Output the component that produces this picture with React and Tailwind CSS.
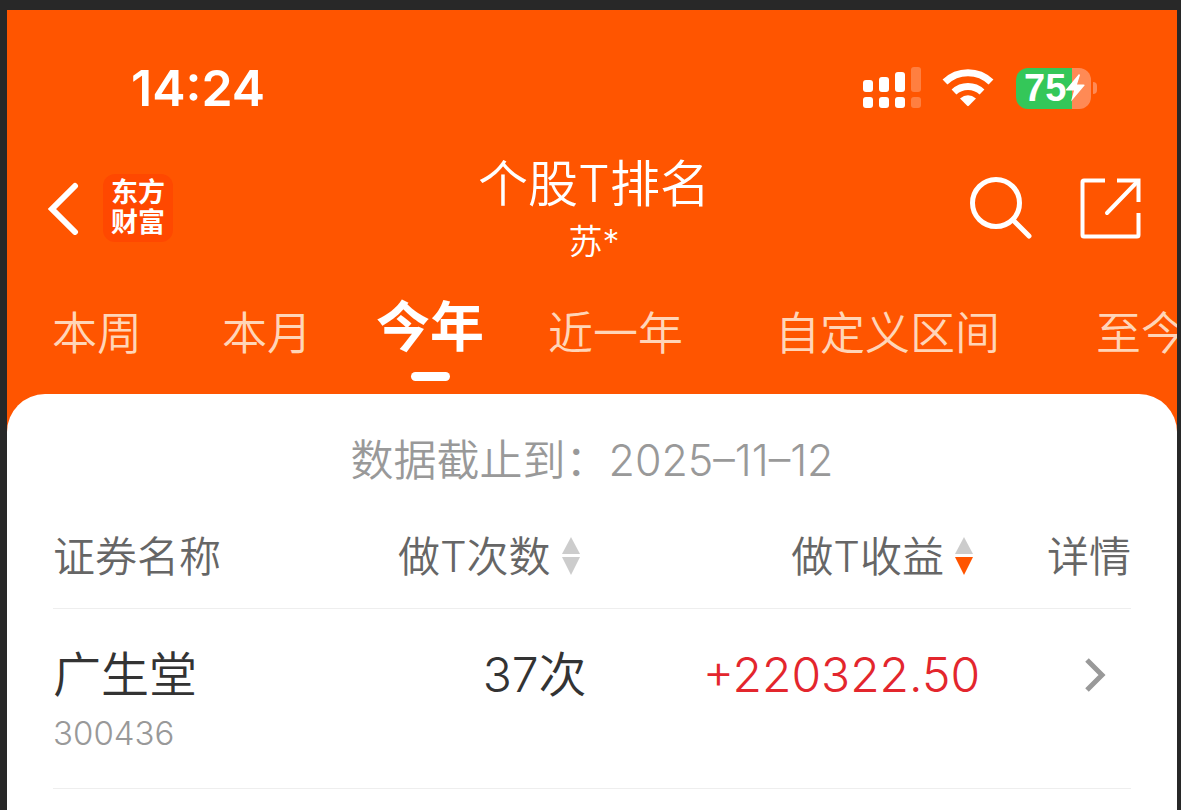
import { useState } from 'react';

const tabs = [
  { name: '本周', gap: '' },
  { name: '本月', gap: 'ml-20' },
  { name: '今年', gap: 'ml-16' },
  { name: '近一年', gap: 'ml-16' },
  { name: '自定义区间', gap: 'ml-23' },
  { name: '至今', gap: 'ml-24' },
];

const stocks = [
  {
    name: '广生堂', code: '300436', count: '37次', profit: '+220322.50',
  },
];

function Signal() {
  return (
    <svg width="60" height="42" viewBox="0 0 60 42" fill="#fff" aria-hidden="true">
      <rect x="1" y="13" width="10" height="12" rx="3" />
      <rect x="17" y="10" width="10" height="15" rx="3" />
      <rect x="33" y="5" width="10" height="20" rx="3" />
      <rect x="49" y="0" width="10" height="25" rx="3" opacity="0.25" />
      <rect x="1" y="30" width="10" height="11" rx="3" />
      <rect x="17" y="30" width="10" height="11" rx="3" />
      <rect x="33" y="30" width="10" height="11" rx="3" />
      <rect x="49" y="30" width="10" height="11" rx="3" opacity="0.25" />
    </svg>
  );
}

function Wifi() {
  return (
    <svg width="52" height="38" viewBox="0 0 52 38" aria-hidden="true">
      <g fill="none" stroke="#fff" strokeWidth="7">
        <path d="M3 13 A33 33 0 0 1 49 13" />
        <path d="M12 23 A20.500 20.500 0 0 1 40 23" />
      </g>
      <path d="M18 29.500 Q26 23 34 29.500 L26.800 36.800 Q26 37.500 25.200 36.800 Z" fill="#fff" />
    </svg>
  );
}

function Battery() {
  return (
    <div className="flex items-center gap-0.5">
      <div className="flex h-[41px] w-[75px] items-center overflow-hidden rounded-xl bg-linear-to-r from-[#34c759] from-75% to-[#ff8a55] to-75% pl-2">
        <span className="font-['Liberation_Sans',sans-serif] text-[38px] leading-10 font-bold">75</span>
        <svg className="shrink-0" width="19" height="28" viewBox="0 0 19 28" fill="#fff" aria-hidden="true">
          <path d="M13 0 L0 15.500 Q-0.500 16.500 1 16.500 H8 L5 27.500 L18.500 11.500 Q19 10.500 17.500 10.500 H11 L14 1 Z" />
        </svg>
      </div>
      <span className="h-3 w-1 rounded-r-full bg-[#ff8a55]" />
    </div>
  );
}

function SortIcon({ active }) {
  return (
    <svg width="20" height="38" viewBox="0 0 20 38" aria-hidden="true">
      <path d="M10 0 L19 17 H1 Z" fill="#ccc" />
      <path d="M1 20 H19 L10 38 Z" fill={active ? '#ff5500' : '#ccc'} />
    </svg>
  );
}

export default function App() {
  const [activeTab, setActiveTab] = useState('今年');

  return (
    <div className="min-h-screen overflow-hidden bg-[#282828] pt-[10px] pr-1 pl-[7px] font-[Inter,'Noto_Sans_CJK_SC',sans-serif]">
      <div className="flex min-h-[800px] flex-col overflow-hidden bg-[#ff5500]">
        <header className="text-white">
          <div className="flex items-center justify-between pt-[54px] pr-20 pl-[124px]">
            <span className="text-[50px] leading-12 font-semibold">14:24</span>
            <div className="flex items-center gap-5">
              <Signal />
              <div className="flex items-center gap-[22px]">
                <Wifi />
                <Battery />
              </div>
            </div>
          </div>

          <div className="mt-10 grid grid-cols-3 items-center pr-9 pl-10">
            <div className="flex items-center gap-6">
              <button type="button" aria-label="返回">
                <svg width="32" height="54" viewBox="0 0 32 54" fill="none" stroke="#fff" strokeWidth="6" strokeLinecap="round" aria-hidden="true">
                  <path d="M28 5 L5 28 L28 51" />
                </svg>
              </button>
              <span className="rounded-xl bg-[#ff4800] px-2 py-1 text-[27px] leading-[30px] font-bold">
                东方
                <br />
                财富
              </span>
            </div>
            <div className="text-center font-[350]">
              <h1 className="text-[50px] leading-[64px]">个股T排名</h1>
              <p className="mt-1 text-[34px] leading-11">苏*</p>
            </div>
            <div className="flex items-center justify-end gap-12">
              <button type="button" aria-label="搜索">
                <svg width="62" height="62" viewBox="0 0 62 62" fill="none" stroke="#fff" strokeWidth="5" strokeLinecap="round" aria-hidden="true">
                  <circle cx="26" cy="26" r="23.500" />
                  <path d="M43 43 L59 59" />
                </svg>
              </button>
              <button type="button" aria-label="分享">
                <svg width="61" height="61" viewBox="0 0 61 61" fill="none" stroke="#fff" strokeWidth="4" aria-hidden="true">
                  <path d="M25 2.500 H4 Q2.500 2.500 2.500 4 V57 Q2.500 58.500 4 58.500 H57 Q58.500 58.500 58.500 57 V35" />
                  <path d="M37 2.500 H58.500 V24" />
                  <path d="M27 35 L58 3" strokeLinecap="round" />
                </svg>
              </button>
            </div>
          </div>

          <nav className="flex h-[130px] items-start overflow-hidden pt-8 pl-[45px] whitespace-nowrap">
            {tabs.map((tab) => (
              <button
                key={tab.name}
                type="button"
                onClick={() => setActiveTab(tab.name)}
                className={`flex shrink-0 flex-col items-center ${tab.gap}`}
              >
                {activeTab === tab.name ? (
                  <>
                    <span className="text-[54px] leading-[64px] font-bold">{tab.name}</span>
                    <span className="mt-3 h-[9px] w-[39px] rounded-full bg-white" />
                  </>
                ) : (
                  <span className="text-[45px] leading-[76px] font-[350] text-[#ffd5b8]">{tab.name}</span>
                )}
              </button>
            ))}
          </nav>
        </header>

        <main className="grow rounded-t-[38px] bg-white px-[46px] pt-9">
          <p className="text-center text-[43px] leading-[60px] font-[350] text-[#999]">数据截止到：2025–11–12</p>

          <table className="mt-[15px] w-full table-fixed">
            <thead>
              <tr className="h-[103px] border-b border-[#eee] text-[42px] text-[#666]">
                <th className="w-[26%] text-left font-[350]">证券名称</th>
                <th className="w-[23.5%] font-[350]">
                  <button type="button" className="ml-auto flex items-center gap-2.5 pr-1.5 whitespace-nowrap">
                    做T次数
                    <SortIcon />
                  </button>
                </th>
                <th className="w-[36.5%] font-[350]">
                  <button type="button" className="ml-auto flex items-center gap-2.5 pr-1.5 whitespace-nowrap">
                    做T收益
                    <SortIcon active />
                  </button>
                </th>
                <th className="w-[14%] text-right font-[350]">详情</th>
              </tr>
            </thead>
            <tbody>
              {stocks.map((stock) => (
                <tr key={stock.code} className="h-[180px] border-b border-[#eee] align-top text-[48px] leading-[64px] font-[350] text-[#333]">
                  <td className="pt-[34px]">
                    {stock.name}
                    <div className="text-[33px] leading-[52px] text-[#999]">{stock.code}</div>
                  </td>
                  <td className="pt-[34px] text-right">{stock.count}</td>
                  <td className="pt-[34px] text-right text-[#e3262d]">{stock.profit}</td>
                  <td className="pt-[34px]">
                    <button type="button" aria-label="详情" className="mr-6 ml-auto flex h-16 items-center">
                      <svg width="22" height="34" viewBox="0 0 22 34" fill="none" stroke="#999" strokeWidth="5" aria-hidden="true">
                        <path d="M2 2 L17 17 L2 32" />
                      </svg>
                    </button>
                  </td>
                </tr>
              ))}
            </tbody>
          </table>
        </main>
      </div>
    </div>
  );
}
